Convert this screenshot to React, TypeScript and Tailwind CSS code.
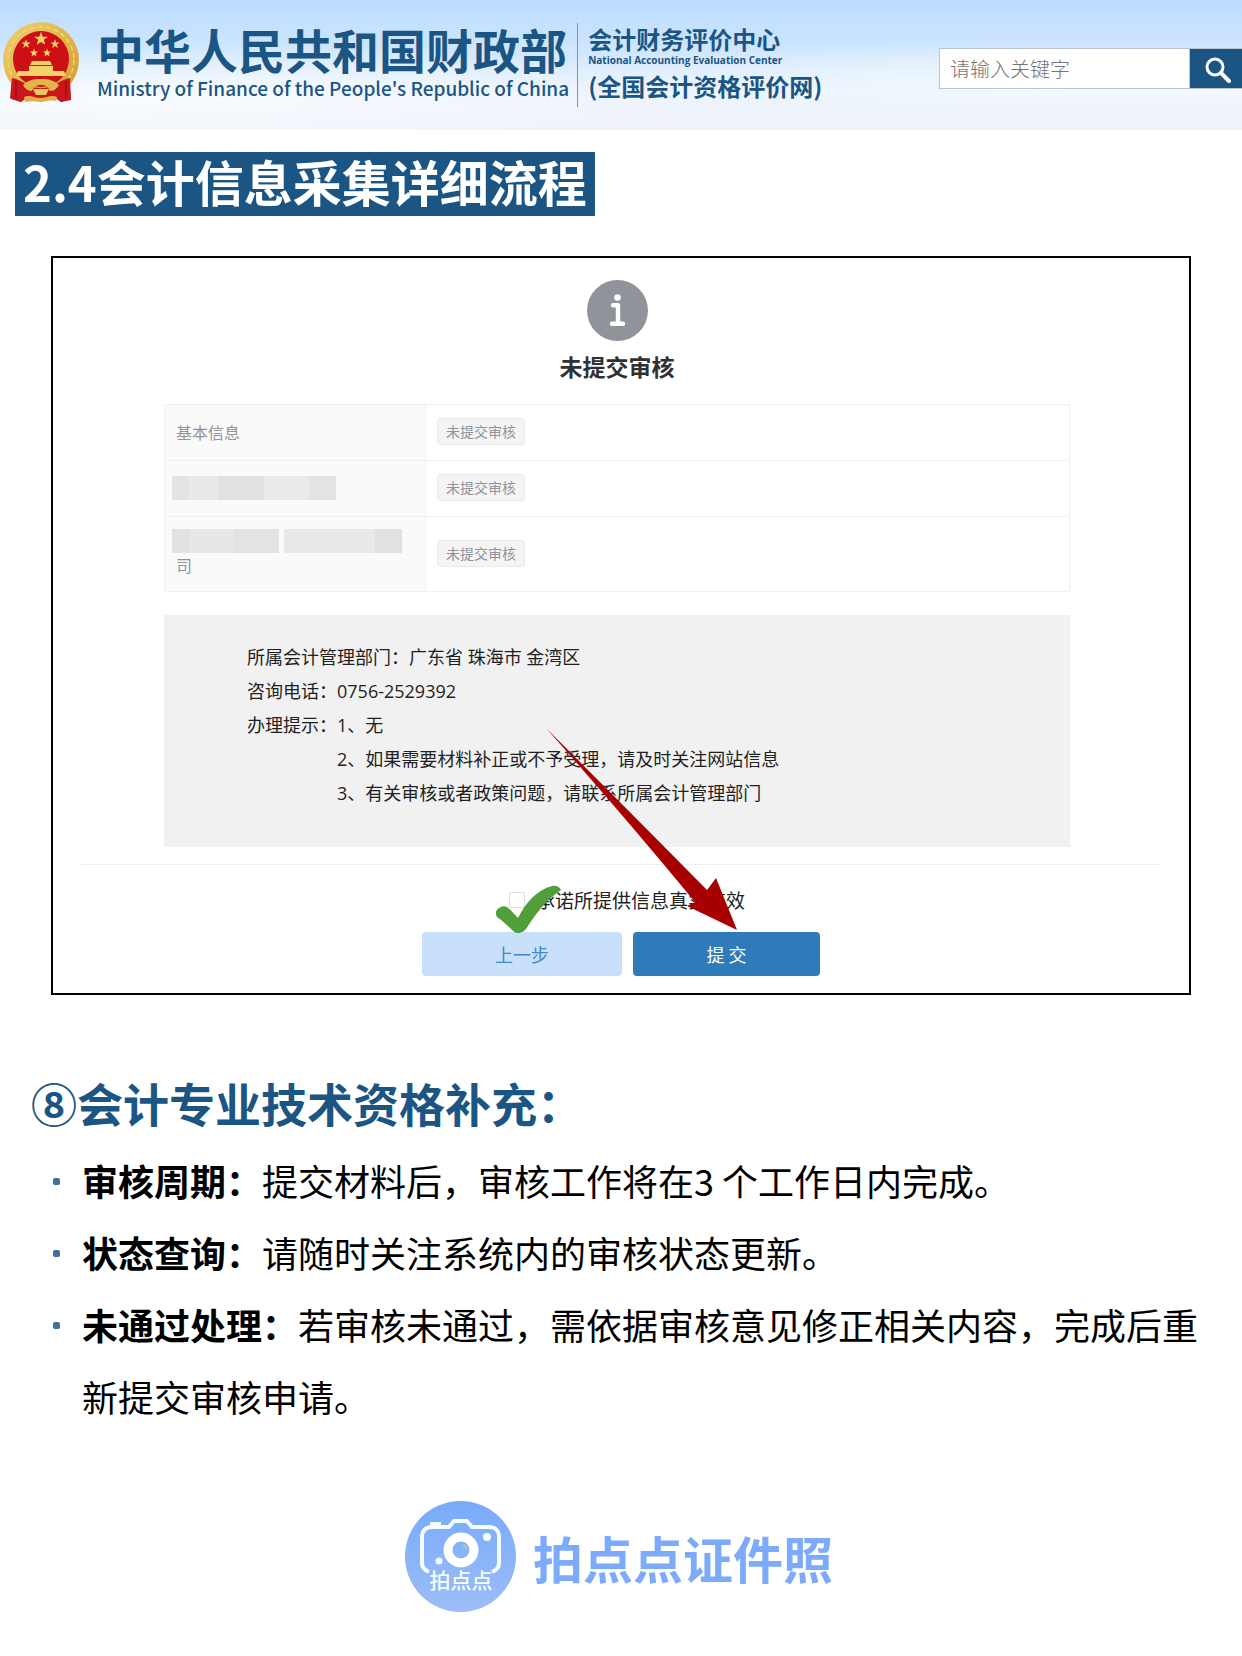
import type { ReactNode } from "react";

const ROWS = [
  { id: "basic", label: <>基本信息</> },
  {
    id: "education",
    label: (
      <Mosaic
        blocks={[
          "w-[17px] bg-[#e3e4e5]",
          "w-[29px] bg-[#e9e9e9]",
          "w-[46px] bg-[#e0e1e3]",
          "w-[45px] bg-[#eaeaea]",
          "w-[27px] bg-[#e3e4e6]",
        ]}
      />
    ),
  },
  {
    id: "company",
    label: (
      <>
        <Mosaic
          blocks={[
            "w-[17px] bg-[#e2e2e2]",
            "w-[45px] bg-[#e6e7e9]",
            "w-[45px] bg-[#e1e3e5]",
            "w-[5px]",
            "w-[91px] bg-[#e9e9e9]",
            "w-[27px] bg-[#e1e1e1]",
          ]}
        />
        司
      </>
    ),
  },
];

const STEPS = [
  { title: "审核周期：", text: "提交材料后，审核工作将在3 个工作日内完成。" },
  { title: "状态查询：", text: "请随时关注系统内的审核状态更新。" },
  {
    title: "未通过处理：",
    text: "若审核未通过，需依据审核意见修正相关内容，完成后重新提交审核申请。",
  },
];

const App = () => {
  return (
    <div className="min-h-screen bg-white pb-11 font-['Noto_Sans_CJK_SC',sans-serif] text-black">
      <Header />
      <main>
        <h1 className="ml-[15px] mt-[22px] w-fit bg-[#1b5583] px-2 pb-[6px] text-[49px] font-bold leading-[58px] text-white">
          2.4会计信息采集详细流程
        </h1>
        <ReviewCard />
        <section className="ml-[31px] mr-[30px] mt-[75px]">
          <h2 className="text-[46px] font-bold leading-[64px] text-[#1b5583]">
            ⑧会计专业技术资格补充：
          </h2>
          <ul className="mt-[10px]">
            {STEPS.map((step) => (
              <li key={step.title} className="flex text-4xl leading-[72px]">
                <span className="ml-[22px] mr-[22px] mt-[34px] h-[7px] w-[7px] shrink-0 rounded-xs bg-[#41709f]" />
                <p className="leading-[72px]">
                  <strong className="font-bold">{step.title}</strong>
                  {step.text}
                </p>
              </li>
            ))}
          </ul>
        </section>
      </main>
      <footer className="mt-[69px] flex items-center justify-center gap-[17px] pr-1">
        <CameraLogo />
        <span className="text-[50px] font-bold leading-[64px] text-[#7dabfb]">拍点点证件照</span>
      </footer>
    </div>
  );
};

export default App;

function Header() {
  return (
    <header className="flex h-[130px] items-center bg-[radial-gradient(ellipse_at_92%_60%,rgba(255,255,255,0.65),transparent_35%),radial-gradient(ellipse_at_10%_75%,rgba(255,255,255,0.7),transparent_40%),linear-gradient(to_bottom,#bbdcfe_0%,#cde5fe_35%,#ebf3fd_72%,#eff2fb_100%)]">
      <Emblem />
      <div className="ml-[17px] pb-[5px] text-[#1b5583]">
        <p className="mb-1 text-[47px] font-bold leading-[46px]">中华人民共和国财政部</p>
        <p className="text-[19px] font-medium leading-[24px]">
          Ministry of Finance of the People's Republic of China
        </p>
      </div>
      <div className="ml-2 border-l border-[#7497b6] pl-[10px] text-[#1b5583]">
        <p className="text-2xl font-bold leading-[32px]">会计财务评价中心</p>
        <p className="font-['Open_Sans',sans-serif] text-[10px] font-bold leading-[10px]">
          National Accounting Evaluation Center
        </p>
        <p className="pb-1 pt-1 text-2xl font-bold leading-[34px]">(全国会计资格评价网)</p>
      </div>
      <form className="mb-[-7px] ml-auto flex h-[41px]" onSubmit={(e) => e.preventDefault()}>
        <input
          type="text"
          aria-label="请输入关键字"
          placeholder="请输入关键字"
          className="w-[251px] border border-[#bcc5cf] bg-white px-[10px] text-xl font-light placeholder:text-[#757575]"
        />
        <button
          type="submit"
          aria-label="搜索"
          className="flex w-[52px] items-center justify-center border-y border-[#bcc5cf] bg-[#1b5583]"
        >
          <svg width="30" height="30" viewBox="0 0 30 30" fill="none" stroke="#fff">
            <circle cx="14" cy="13" r="8" strokeWidth="3" />
            <path d="M20 19l8 8" strokeWidth="4" strokeLinecap="round" />
          </svg>
        </button>
      </form>
    </header>
  );
}

function ReviewCard() {
  return (
    <section className="mx-[51px] mt-10 border-2 border-black pb-[17px] pt-[22px]">
      <div className="pl-[111px] pr-[119px]">
        <svg className="mx-auto" width="61" height="61" viewBox="0 0 61 61">
          <circle cx="30.500" cy="30.500" r="30.500" fill="#909399" />
          <circle cx="30.500" cy="17.500" r="3.300" fill="#fff" />
          <path
            d="M26 25.200h5v18.500M25 43.800h11"
            fill="none"
            stroke="#fff"
            strokeWidth="4.400"
            strokeLinecap="round"
            strokeLinejoin="round"
          />
        </svg>
        <h3 className="mt-[9px] text-center text-[23px] font-bold leading-[32px] text-[#303133]">
          未提交审核
        </h3>
        <table className="mt-[22px] w-full border-collapse text-base text-[#909399]">
          <tbody>
            {ROWS.map((row) => (
              <tr key={row.id} className="h-14">
                <th
                  scope="row"
                  className="w-[261px] border border-[#eef0f5] bg-[#fafafa] pb-[14px] pl-[11px] pt-3 text-left font-normal leading-[24px]"
                >
                  {row.label}
                </th>
                <td className="border border-[#eef0f5] pb-[3px] pl-[11px]">
                  <Tag>未提交审核</Tag>
                </td>
              </tr>
            ))}
          </tbody>
        </table>
        <div className="mt-[23px] bg-[#f1f1f1] pb-[37px] pl-[83px] pt-[25px] font-['Open_Sans','Noto_Sans_CJK_SC',sans-serif] text-lg leading-[34px] text-[#1f1f1f]">
          <p>所属会计管理部门：广东省 珠海市 金湾区</p>
          <p>咨询电话：0756-2529392</p>
          <div className="flex">
            <p>办理提示：</p>
            <ul>
              <li>1、无</li>
              <li>2、如果需要材料补正或不予受理，请及时关注网站信息</li>
              <li>3、有关审核或者政策问题，请联系所属会计管理部门</li>
            </ul>
          </div>
        </div>
      </div>
      <hr className="mx-7 mt-[17px] border-[#ebeef5]" />
      <div className="mt-[21px] flex justify-center pl-3">
        <label className="relative flex items-center gap-[11px] text-[19px] leading-[28px] text-[#222]">
          <input
            type="checkbox"
            className="h-4 w-4 appearance-none rounded-xs border border-[#dcdfe6] bg-white"
          />
          承诺所提供信息真实有效
          <svg
            className="pointer-events-none absolute -left-[14px] -top-[1px]"
            width="67"
            height="48"
            viewBox="0 0 67 48"
          >
            <path
              d="M1 27c1-4 7-7 11-5c4 3 7 7 11 11C31 17 42 5 57 1c4-1 8 1 9 4c-12 8-23 20-33 36c-3 5-6 7-10 7c-3 0-5-2-8-5C11 39 5 34 2 32c-1-1-1-3-1-5z"
              fill="#529f3a"
            />
          </svg>
        </label>
      </div>
      <div className="mt-[18px] flex justify-center gap-[11px] text-lg">
        <button type="button" className="h-11 w-[200px] rounded bg-[#c9e0fa] text-[#4488c4]">
          上一步
        </button>
        <button type="button" className="relative h-11 w-[187px] rounded bg-[#2f7ab9] text-white">
          提 交
          <svg
            className="pointer-events-none absolute -left-[87px] -top-[204px]"
            width="192"
            height="203"
            viewBox="0 0 192 203"
          >
            <path d="M0 0Q78 88 149 174L141 178L191 202L170 150L161 162Q84 84 0 0z" fill="#a80000" />
          </svg>
        </button>
      </div>
    </section>
  );
}

function Tag({ children }: { children: ReactNode }) {
  return (
    <span className="inline-block rounded border border-[#e9e9eb] bg-[#f4f4f5] px-2 align-middle text-sm leading-[25px]">
      {children}
    </span>
  );
}

function Mosaic({ blocks }: { blocks: string[] }) {
  return (
    <span className="-ml-1 flex h-6">
      {blocks.map((block, index) => (
        <span key={index} className={block} />
      ))}
    </span>
  );
}

const STAR = "M0-10L2.400-3.200H9.500L3.900 1.200L5.900 8.100L0 4L-5.900 8.100L-3.900 1.200L-9.500-3.200H-2.400z";

function Emblem() {
  return (
    <svg className="ml-[2px] mb-[6px] shrink-0" width="78" height="84" viewBox="0 0 78 84">
      <defs>
        <linearGradient id="gold" x1="0" y1="0" x2="1" y2="1">
          <stop offset="0" stopColor="#f0d274" />
          <stop offset="0.500" stopColor="#e2b64a" />
          <stop offset="1" stopColor="#cf9a30" />
        </linearGradient>
      </defs>
      <path d="M10 58L67 58L69 80L59 82L52 77L39 81L26 77L19 82L9 79z" fill="#c9151b" />
      <circle cx="39" cy="40" r="38" fill="url(#gold)" />
      <circle cx="39" cy="40" r="33" fill="none" stroke="#f0d581" strokeWidth="1.500" strokeDasharray="5 3" />
      <circle cx="39" cy="39" r="28" fill="#cc1016" />
      <path d="M10 58c7 1 13 6 19 8c6 3 14 3 20 0c6-2 12-7 19-8l1 21l-10 3l-5-5l-15 3l-15-3l-5 5l-11-4z" fill="#c9151b" />
      <g fill="#f3d267">
        <path d={STAR} transform="translate(39 19) scale(.72)" />
        <path d={STAR} transform="translate(24 24) scale(.48)" />
        <path d={STAR} transform="translate(53 24) scale(.48)" />
        <path d={STAR} transform="translate(32 33) scale(.44)" />
        <path d={STAR} transform="translate(45 33) scale(.44)" />
        <path d="M30 41h18l2 4h-22zM27 46h24v7h-24zM16 51h46l2 5h-50z" />
      </g>
      <path d="M21 65c5-5 10-6 18-6s13 1 18 6c-3 5-6 6-9 6c-2-5-5-6-9-6s-7 1-9 6c-4 0-7-2-9-6z" fill="#e3b548" />
      <path d="M31 69h16l-3 6h-10z" fill="#eec75c" />
      <path d="M22 77c6-3 10 1 16 1s12-4 17-1l-1 4c-5-1-9 0-15 1c-7-1-11-1-16 0z" fill="#dfb047" />
      <path d="M14 61v18M64 61v18" stroke="#9b0d12" strokeWidth="1.500" />
    </svg>
  );
}

function CameraLogo() {
  return (
    <svg className="shrink-0" width="111" height="111" viewBox="0 0 111 111">
      <defs>
        <linearGradient id="lens" x1="0" y1="0" x2="0" y2="1">
          <stop offset="0" stopColor="#78aafb" />
          <stop offset="1" stopColor="#9dbdf6" />
        </linearGradient>
      </defs>
      <circle cx="55.500" cy="55.500" r="55.500" fill="url(#lens)" />
      <path
        d="M24 71c-5-2-7-5-7-9V36c0-6 4-10 10-10h17l5-6h13l5 6h17c6 0 10 4 10 10v26c0 4-2 7-7 9"
        fill="none"
        stroke="#f4fdff"
        strokeWidth="4"
      />
      <path d="M25 21h11v4h-11z" fill="#f4fdff" />
      <circle cx="56" cy="49" r="13" fill="none" stroke="#fff" strokeWidth="9" />
      <path d="M57 43c4 0 6 2 6 5l-3-1z" fill="#a9c6b8" />
      <circle cx="82" cy="36" r="4" fill="#f4fdff" />
      <circle cx="34" cy="60" r="3.500" fill="#f4fdff" />
      <text x="56" y="87" textAnchor="middle" fontSize="21" fontWeight="500" fill="#f4fdff">
        拍点点
      </text>
    </svg>
  );
}
